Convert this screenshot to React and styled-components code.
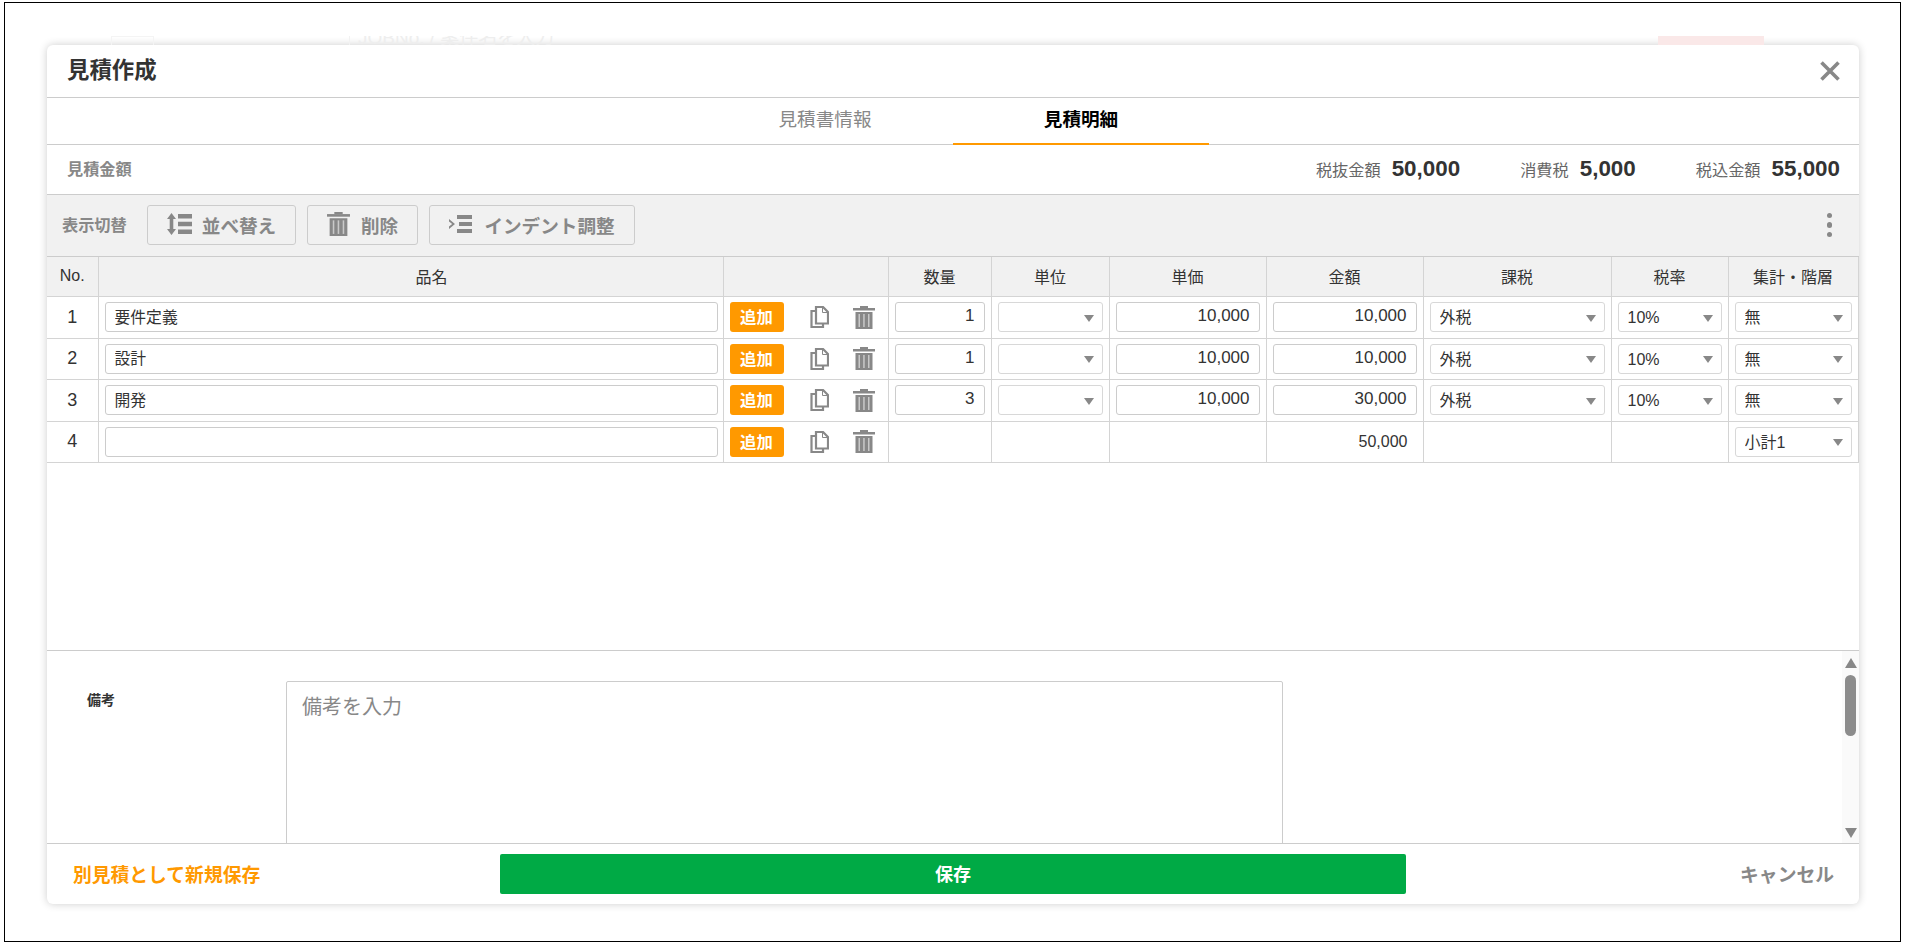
import React from 'react';
import styled, { createGlobalStyle } from 'styled-components';

const FONT = `"Liberation Sans", "Noto Sans CJK JP", Arial, sans-serif`;

const rows = [
  { no: 1, name: '要件定義', qty: '1', price: '10,000', amount: '10,000', tax: '外税', rate: '10%', level: '無' },
  { no: 2, name: '設計', qty: '1', price: '10,000', amount: '10,000', tax: '外税', rate: '10%', level: '無' },
  { no: 3, name: '開発', qty: '3', price: '10,000', amount: '30,000', tax: '外税', rate: '10%', level: '無' },
  { no: 4, name: '', subtotal: '50,000', level: '小計1' },
];

const columns = [
  ['No.', 51], ['品名', 625, 42], ['', 165], ['数量', 103], ['単位', 118],
  ['単価', 157], ['金額', 157], ['課税', 188], ['税率', 117], ['集計・階層', 130],
];

const GlobalStyle = createGlobalStyle`
  html, body {
    margin: 0;
    height: 100%;
    background: #fff;
    overflow: hidden;
  }
  * {
    box-sizing: border-box;
  }
`;

const Frame = styled.div`
  width: 1897px;
  height: 940px;
  margin: 2px 0 0 4px;
  padding: 33px 0 0 42px;
  border: 1px solid #000;
  background: #fff;
  font-family: ${FONT};
  color: #333;
`;

const GhostStrip = styled.div`
  width: 1812px;
  height: 9px;
  overflow: hidden;
  display: flex;
  align-items: flex-start;
  padding-left: 64px;
`;

const GhostBox = styled.div`
  flex: none;
  width: 43px;
  height: 20px;
  border: 1px solid #f4f4f4;
`;

const GhostText = styled.div`
  flex: none;
  margin-left: 195px;
  padding-left: 8px;
  border-left: 1px solid #f2f2f2;
  font-size: 19px;
  line-height: 16px;
  margin-top: -6px;
  height: 20px;
  width: 1309px;
  color: #eeeeee;
  white-space: nowrap;
`;

const GhostBadge = styled.div`
  flex: none;
  width: 106px;
  height: 9px;
  background: #fae8e8;
`;

const Modal = styled.div`
  width: 1812px;
  height: 859px;
  display: flex;
  flex-direction: column;
  background: #fff;
  border-radius: 6px;
  box-shadow: 0 0 9px rgba(0, 0, 0, 0.2);
  overflow: hidden;
`;

const Header = styled.div`
  flex: none;
  height: 53px;
  display: flex;
  align-items: center;
  justify-content: space-between;
  padding: 0 19px 0 20px;
  border-bottom: 1px solid #ccc;
`;

const Title = styled.h1`
  margin: 0;
  font-size: 22.4px;
  line-height: 28px;
  font-weight: 700;
  color: #333;
`;

const CloseIcon = styled.svg`
  display: block;
  width: 20px;
  height: 20px;
`;

const Tabs = styled.div`
  flex: none;
  height: 47px;
  display: flex;
  justify-content: center;
  border-bottom: 1px solid #ccc;
`;

const Tab = styled.div`
  width: 256px;
  height: 47px;
  line-height: 44px;
  text-align: center;
  font-size: 18.6px;
  font-weight: ${(p) => (p.$active ? 700 : 400)};
  color: ${(p) => (p.$active ? '#000' : '#888')};
  border-bottom: 2px solid ${(p) => (p.$active ? '#ff9900' : 'transparent')};
`;

const Summary = styled.div`
  flex: none;
  height: 50px;
  display: flex;
  align-items: center;
  padding: 0 19px 2px 20px;
  gap: 60px;
  border-bottom: 1px solid #ccc;
`;

const SummaryLabel = styled.div`
  margin-right: auto;
  padding-bottom: 2px;
  font-size: 16.2px;
  font-weight: 700;
  color: #888;
`;

const Amount = styled.div`
  display: flex;
  align-items: baseline;
  gap: 11px;
  font-size: 16.2px;
  color: #666;
`;

const AmountValue = styled.span`
  font-size: 22.4px;
  font-weight: 700;
  color: #333;
`;

const Toolbar = styled.div`
  flex: none;
  height: 62px;
  display: flex;
  align-items: center;
  padding: 0 27px 1px 15px;
  background: #f1f1f1;
  border-bottom: 1px solid #ccc;
`;

const ToolbarLabel = styled.div`
  width: 85px;
  padding-bottom: 2px;
  font-size: 16.2px;
  font-weight: 700;
  color: #888;
`;

const ToolButton = styled.button`
  display: flex;
  align-items: center;
  justify-content: center;
  gap: ${(p) => p.$gap}px;
  width: ${(p) => p.$width}px;
  height: 40px;
  margin-right: 11px;
  padding: 0 0 2px;
  border: 1.5px solid #ccc;
  border-radius: 3px;
  background: #f1f1f1;
  font-family: inherit;
  font-size: 18.6px;
  font-weight: 700;
  color: #888;
`;

const Kebab = styled.div`
  margin-left: auto;
  display: flex;
  flex-direction: column;
  gap: 4px;
`;

const Dot = styled.span`
  width: 5.500px;
  height: 5.500px;
  border-radius: 50%;
  background: #888;
`;

const TableArea = styled.div`
  flex: 1;
  min-height: 0;
`;

const Table = styled.table`
  width: 1811px;
  table-layout: fixed;
  border-collapse: collapse;
`;

const Th = styled.th`
  width: ${(p) => p.$width}px;
  height: 39.500px;
  padding: 0 0 2px ${(p) => p.$indent || 0}px;
  background: #f1f1f1;
  border: 1px solid #d4d4d4;
  border-top: 0;
  font-size: 16px;
  font-weight: 400;
  color: #333;
  &:first-child { border-left: 0; }
`;

const Td = styled.td`
  height: 41.500px;
  padding: 0 6px;
  border: 1px solid #d4d4d4;
  font-size: 15.8px;
  &:first-child { border-left: 0; }
`;

const NoCell = styled(Td)`
  padding: 0;
  font-size: 18px;
  text-align: center;
`;

const NameCell = styled(Td)`
  padding-right: 5px;
`;

const AmountCell = styled(Td)`
  padding-right: 15px;
  text-align: right;
  font-size: 16px;
`;

const TextInput = styled.input`
  display: block;
  width: 100%;
  height: 30px;
  padding: 0 9px 2px;
  border: 1px solid #ccc;
  border-top-width: 1.5px;
  border-radius: 3px;
  background: #fff;
  font-family: inherit;
  font-size: ${(p) => (p.$right ? '17px' : '15.8px')};
  color: #333;
  text-align: ${(p) => (p.$right ? 'right' : 'left')};
  outline: none;
`;

const SelectWrap = styled.div`
  position: relative;
  height: 30px;
  &::after {
    content: '';
    position: absolute;
    right: 9px;
    top: 12.500px;
    border-left: 5px solid transparent;
    border-right: 5px solid transparent;
    border-top: 7px solid #888;
    pointer-events: none;
  }
`;

const Select = styled.select`
  display: block;
  width: 100%;
  height: 30px;
  padding: 1px 20px 0 9px;
  border: 1px solid #d8d8d8;
  border-radius: 3px;
  appearance: none;
  background: #fff;
  font-family: inherit;
  font-size: 16px;
  color: #333;
  outline: none;
`;

const ActionRow = styled.div`
  display: flex;
  align-items: center;
`;

const AddButton = styled.button`
  width: 54px;
  height: 30px;
  padding: 0 0 2px;
  margin-right: 26px;
  border: 0;
  border-radius: 3px;
  background: #ff9900;
  font-family: inherit;
  font-size: 16.400px;
  font-weight: 700;
  color: #fff;
`;

const ActionIcon = styled.svg`
  display: block;
  flex: none;
  margin-right: ${(p) => p.$gap || 0}px;
`;

const Remarks = styled.div`
  flex: none;
  height: 194px;
  display: flex;
  border-top: 1px solid #ccc;
  border-bottom: 1px solid #ccc;
`;

const RemarksBody = styled.div`
  flex: 1;
  min-width: 0;
  overflow: hidden;
  display: flex;
  align-items: flex-start;
  padding: 30px 0 0 40px;
`;

const RemarksLabel = styled.div`
  width: 199px;
  padding-top: 10px;
  font-size: 14px;
  line-height: 18px;
  font-weight: 700;
  color: #333;
`;

const RemarksInput = styled.textarea`
  flex: none;
  display: block;
  width: 997px;
  height: 240px;
  padding: 12px 15px;
  border: 1px solid #ccc;
  border-radius: 2px;
  resize: none;
  outline: none;
  font-family: inherit;
  font-size: 20px;
  line-height: 26px;
  color: #333;
  &::placeholder {
    color: #888;
    opacity: 1;
  }
`;

const ScrollTrack = styled.div`
  flex: none;
  width: 17px;
  display: flex;
  flex-direction: column;
  align-items: center;
  padding: 7px 0 5px;
  background: #fafafa;
`;

const ScrollArrow = styled.span`
  flex: none;
  width: 0;
  height: 0;
  border-left: 6px solid transparent;
  border-right: 6px solid transparent;
  ${(p) => (p.$down ? 'border-top: 10px solid #888; margin-top: auto;' : 'border-bottom: 10px solid #888;')}
`;

const ScrollThumb = styled.span`
  flex: none;
  width: 11px;
  height: 61px;
  margin-top: 7px;
  border-radius: 5.500px;
  background: #8c8c8c;
`;

const Footer = styled.div`
  flex: none;
  height: 60px;
  display: grid;
  grid-template-columns: 453px 906px 1fr;
  align-items: center;
`;

const NewSaveLink = styled.a`
  padding: 0 0 2px 26px;
  font-size: 18.800px;
  font-weight: 700;
  color: #ff9900;
`;

const SaveButton = styled.button`
  height: 40px;
  padding: 0 0 2px;
  border: 0;
  border-radius: 2px;
  background: #00aa45;
  font-family: inherit;
  font-size: 18px;
  font-weight: 700;
  color: #fff;
`;

const CancelLink = styled.a`
  justify-self: end;
  padding: 0 25px 2px 0;
  font-size: 18.800px;
  font-weight: 700;
  color: #888;
`;

const CopyGlyph = () => (
  <ActionIcon $gap={24} width="19" height="22" viewBox="0 0 19 22" fill="none" stroke="#888" strokeWidth="2.200">
    <path d="M6 1h7l5 5v11.500H6z" />
    <path d="M6 5H1.500v16H13v-3.500" />
    <path d="M12.500 1v5.500H18" strokeWidth="1" />
  </ActionIcon>
);

const TrashGlyph = ({ size = 22 }) => (
  <svg width={size} height={size + 1} viewBox="0 0 22 23" style={{ display: 'block', flex: 'none' }}>
    <rect x="7" y="0" width="8" height="2" fill="#888" />
    <rect x="0" y="2" width="22" height="2.500" fill="#888" />
    <rect x="2.500" y="6" width="17" height="17" fill="#888" />
    <rect x="5.500" y="8" width="1.500" height="13" fill="#c9c9c9" />
    <rect x="10.200" y="8" width="1.500" height="13" fill="#c9c9c9" />
    <rect x="15" y="8" width="1.500" height="13" fill="#c9c9c9" />
  </svg>
);

const SortGlyph = () => (
  <svg width="25" height="22" viewBox="0 0 25 22" fill="#888" style={{ display: 'block' }}>
    <path d="M4.500 0l4.500 6H6.300v10H9l-4.500 6L0 16h2.700V6H0z" />
    <rect x="11" y="1" width="14" height="4.500" />
    <rect x="11" y="8.750" width="14" height="4.500" />
    <rect x="11" y="16.500" width="14" height="4.500" />
  </svg>
);

const IndentGlyph = () => (
  <svg width="23" height="18" viewBox="0 0 23 18" fill="#888" style={{ display: 'block' }}>
    <path d="M0 4l6 5-6 5v-2.500L3.200 9 0 6.500z" />
    <rect x="8" y="0" width="15" height="4" />
    <rect x="10" y="7" width="13" height="4" />
    <rect x="8" y="14" width="15" height="4" />
  </svg>
);

const SelectBox = ({ value }) => (
  <SelectWrap>
    <Select defaultValue={value}>
      <option value={value}>{value}</option>
    </Select>
  </SelectWrap>
);

const Row = ({ row }) => (
  <tr>
    <NoCell>{row.no}</NoCell>
    <NameCell>
      <TextInput defaultValue={row.name} />
    </NameCell>
    <Td>
      <ActionRow>
        <AddButton>追加</AddButton>
        <CopyGlyph />
        <TrashGlyph />
      </ActionRow>
    </Td>
    {row.subtotal ? (
      <>
        <Td />
        <Td />
        <Td />
        <AmountCell>{row.subtotal}</AmountCell>
        <Td />
        <Td />
      </>
    ) : (
      <>
        <Td><TextInput $right defaultValue={row.qty} /></Td>
        <Td><SelectBox value="" /></Td>
        <Td><TextInput $right defaultValue={row.price} /></Td>
        <Td><TextInput $right defaultValue={row.amount} /></Td>
        <Td><SelectBox value={row.tax} /></Td>
        <Td><SelectBox value={row.rate} /></Td>
      </>
    )}
    <Td><SelectBox value={row.level} /></Td>
  </tr>
);

export default function App() {
  return (
    <>
      <GlobalStyle />
      <Frame>
        <GhostStrip>
          <GhostBox />
          <GhostText>JOBNo. / 案件名を入力</GhostText>
          <GhostBadge />
        </GhostStrip>
        <Modal>
          <Header>
            <Title>見積作成</Title>
            <CloseIcon viewBox="0 0 20 20" stroke="#888" strokeWidth="3.600" fill="none">
              <path d="M1.500 1.500l17 17M18.500 1.500l-17 17" />
            </CloseIcon>
          </Header>
          <Tabs>
            <Tab>見積書情報</Tab>
            <Tab $active>見積明細</Tab>
          </Tabs>
          <Summary>
            <SummaryLabel>見積金額</SummaryLabel>
            <Amount>税抜金額<AmountValue>50,000</AmountValue></Amount>
            <Amount>消費税<AmountValue>5,000</AmountValue></Amount>
            <Amount>税込金額<AmountValue>55,000</AmountValue></Amount>
          </Summary>
          <Toolbar>
            <ToolbarLabel>表示切替</ToolbarLabel>
            <ToolButton $width={149} $gap={10}><SortGlyph />並べ替え</ToolButton>
            <ToolButton $width={111} $gap={11}><TrashGlyph size={23} />削除</ToolButton>
            <ToolButton $width={206} $gap={12}><IndentGlyph />インデント調整</ToolButton>
            <Kebab>
              <Dot />
              <Dot />
              <Dot />
            </Kebab>
          </Toolbar>
          <TableArea>
            <Table>
              <thead>
                <tr>
                  {columns.map(([label, width, indent], i) => (
                    <Th key={i} $width={width} $indent={indent}>{label}</Th>
                  ))}
                </tr>
              </thead>
              <tbody>
                {rows.map((row) => (
                  <Row key={row.no} row={row} />
                ))}
              </tbody>
            </Table>
          </TableArea>
          <Remarks>
            <RemarksBody>
              <RemarksLabel>備考</RemarksLabel>
              <RemarksInput placeholder="備考を入力" />
            </RemarksBody>
            <ScrollTrack>
              <ScrollArrow />
              <ScrollThumb />
              <ScrollArrow $down />
            </ScrollTrack>
          </Remarks>
          <Footer>
            <NewSaveLink>別見積として新規保存</NewSaveLink>
            <SaveButton>保存</SaveButton>
            <CancelLink>キャンセル</CancelLink>
          </Footer>
        </Modal>
      </Frame>
    </>
  );
}
